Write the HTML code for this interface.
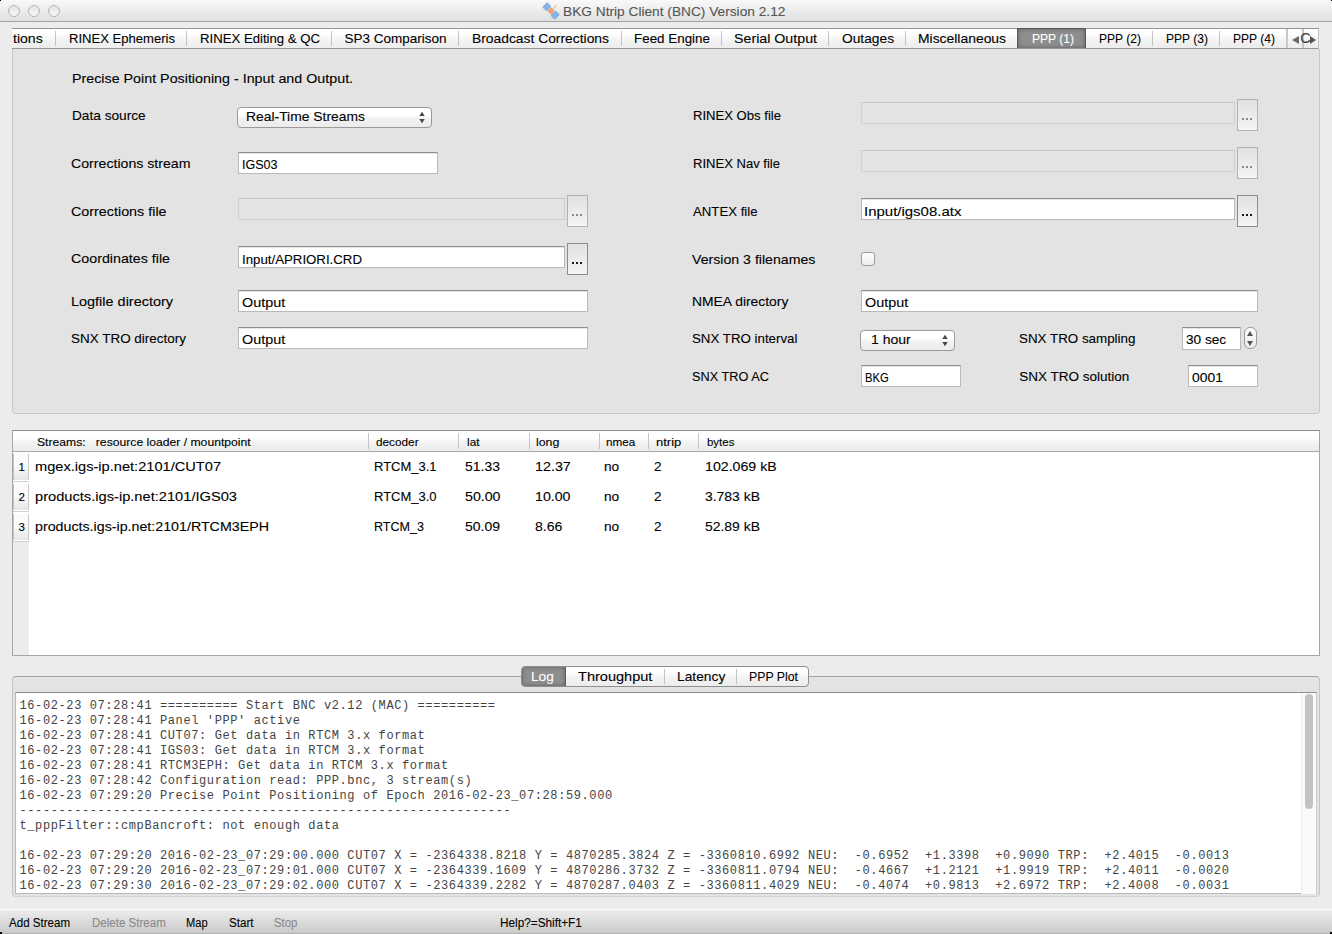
<!DOCTYPE html>
<html><head><meta charset="utf-8">
<style>
html,body{margin:0;padding:0}
body{width:1332px;height:934px;overflow:hidden;position:relative;background:#ececec;font-family:"Liberation Sans",sans-serif;}
.t{position:absolute;white-space:pre;font-family:"Liberation Sans",sans-serif;-webkit-text-stroke:0.1px currentColor;}
.b{position:absolute;box-sizing:border-box;}
.m{position:absolute;white-space:pre;font-family:"Liberation Mono",monospace;font-size:12px;letter-spacing:0.605px;line-height:15px;color:#444;}
.ed{position:absolute;box-sizing:border-box;background:#fff;border:1px solid #b9b9b9;border-top-color:#8e8e8e;box-shadow:inset 0 1px 0 #e6e6e6;}
.dis{position:absolute;box-sizing:border-box;background:#e3e3e3;border:1px solid #d0d0d0;border-top-color:#c4c4c4;}
.btn{position:absolute;box-sizing:border-box;background:linear-gradient(#e1e1e1,#f5f5f5);border:1px solid #8c8c8c;}
.btn.d{border-color:#b3b3b3;}
.dot{position:absolute;width:2px;height:2px;background:#1a1a1a;}
.btn.d .dot{background:#8a8a8a;}
.cb{position:absolute;box-sizing:border-box;background:linear-gradient(#ffffff 35%,#f1f1f1 58%,#ebebeb);border:1px solid #9a9a9a;border-radius:4px;}
.sep{position:absolute;width:1px;background:#c2c2c2;}
</style></head><body>
<div class="b" style="left:0;top:0;width:1332px;height:22px;background:linear-gradient(#f9f9f9,#e0e0e0);border-bottom:1px solid #a4a4a4"></div>
<div class="b" style="left:8px;top:5px;width:12px;height:12px;border-radius:50%;border:1px solid #b4b4b4;background:linear-gradient(#e4e4e4,#f7f7f7)"></div>
<div class="b" style="left:28px;top:5px;width:12px;height:12px;border-radius:50%;border:1px solid #b4b4b4;background:linear-gradient(#e4e4e4,#f7f7f7)"></div>
<div class="b" style="left:48px;top:5px;width:12px;height:12px;border-radius:50%;border:1px solid #b4b4b4;background:linear-gradient(#e4e4e4,#f7f7f7)"></div>
<div class="b" style="left:0;top:0;width:1px;height:1px;background:#000"></div>
<div class="b" style="left:1331px;top:0;width:1px;height:1px;background:#000"></div>
<svg style="position:absolute;left:540px;top:0px" width="22" height="22" viewBox="0 0 22 22">
<g transform="translate(11 10.9) scale(1.12) translate(-11 -10.9) rotate(45 11 10.9)"><rect x="3" y="7.7" width="5.4" height="6.4" rx="0.8" fill="#80b0e4"/><rect x="13.6" y="7.7" width="5.4" height="6.4" rx="0.8" fill="#80b0e4"/>
<line x1="5.7" y1="7.9" x2="5.7" y2="14" stroke="#a9cde8" stroke-width="0.6"/><line x1="16.3" y1="7.9" x2="16.3" y2="14" stroke="#a9cde8" stroke-width="0.6"/>
<rect x="8.5" y="8.5" width="5" height="4.8" rx="0.8" fill="#efa37d"/><line x1="11" y1="8.6" x2="11" y2="3.6" stroke="#f2b896" stroke-width="0.9"/></g></svg>
<div class="t" style="left:563.40px;top:3.80px;font-size:13.5px;line-height:15px;letter-spacing:0.000px;color:#555;transform:scaleX(1.0151);transform-origin:0 0;">BKG Ntrip Client (BNC) Version 2.12</div>
<div class="b" style="left:12px;top:28px;width:1307px;height:21px;background:linear-gradient(#ffffff 25%,#f4f4f4 53%,#ececec);border-top:1px solid #959595;border-bottom:1px solid #959595;border-right:1px solid #c6c6c6"></div>
<div class="sep" style="left:55px;top:31px;height:15px"></div>
<div class="sep" style="left:186px;top:31px;height:15px"></div>
<div class="sep" style="left:331px;top:31px;height:15px"></div>
<div class="sep" style="left:458px;top:31px;height:15px"></div>
<div class="sep" style="left:621px;top:31px;height:15px"></div>
<div class="sep" style="left:721px;top:31px;height:15px"></div>
<div class="sep" style="left:828px;top:31px;height:15px"></div>
<div class="sep" style="left:905px;top:31px;height:15px"></div>
<div class="sep" style="left:1152px;top:31px;height:15px"></div>
<div class="sep" style="left:1219px;top:31px;height:15px"></div>
<div class="b" style="left:1017px;top:28px;width:69px;height:20px;background:#8e8e8e;border:1px solid #575757;border-bottom:none;box-shadow:inset 0 0 4px #5e5e5e"></div>
<div class="t" style="left:68.50px;top:31.00px;font-size:13.5px;line-height:15px;letter-spacing:0.000px;color:#000;transform:scaleX(0.9680);transform-origin:0 0;">RINEX Ephemeris</div>
<div class="t" style="left:199.50px;top:31.00px;font-size:13.5px;line-height:15px;letter-spacing:0.000px;color:#000;transform:scaleX(0.9756);transform-origin:0 0;">RINEX Editing &amp; QC</div>
<div class="t" style="left:344.50px;top:31.00px;font-size:13.5px;line-height:15px;letter-spacing:0.000px;color:#000;">SP3 Comparison</div>
<div class="t" style="left:472.00px;top:31.00px;font-size:13.5px;line-height:15px;letter-spacing:0.000px;color:#000;transform:scaleX(1.0254);transform-origin:0 0;">Broadcast Corrections</div>
<div class="t" style="left:634.00px;top:31.00px;font-size:13.5px;line-height:15px;letter-spacing:0.000px;color:#000;transform:scaleX(0.9922);transform-origin:0 0;">Feed Engine</div>
<div class="t" style="left:734.00px;top:31.00px;font-size:13.5px;line-height:15px;letter-spacing:0.000px;color:#000;transform:scaleX(1.0533);transform-origin:0 0;">Serial Output</div>
<div class="t" style="left:841.50px;top:31.00px;font-size:13.5px;line-height:15px;letter-spacing:0.000px;color:#000;transform:scaleX(1.0196);transform-origin:0 0;">Outages</div>
<div class="t" style="left:918.00px;top:31.00px;font-size:13.5px;line-height:15px;letter-spacing:0.000px;color:#000;transform:scaleX(1.0292);transform-origin:0 0;">Miscellaneous</div>
<div class="t" style="left:1031.50px;top:31.00px;font-size:13.5px;line-height:15px;letter-spacing:0.000px;color:#fff;transform:scaleX(0.8936);transform-origin:0 0;">PPP (1)</div>
<div class="t" style="left:1099.00px;top:31.00px;font-size:13.5px;line-height:15px;letter-spacing:0.000px;color:#000;transform:scaleX(0.8936);transform-origin:0 0;">PPP (2)</div>
<div class="t" style="left:1165.50px;top:31.00px;font-size:13.5px;line-height:15px;letter-spacing:0.000px;color:#000;transform:scaleX(0.8936);transform-origin:0 0;">PPP (3)</div>
<div class="t" style="left:1233.00px;top:31.00px;font-size:13.5px;line-height:15px;letter-spacing:0.000px;color:#000;transform:scaleX(0.8936);transform-origin:0 0;">PPP (4)</div>
<div class="b" style="left:12px;top:29px;width:43px;height:19px;overflow:hidden">
<div class="t" style="left:1.00px;top:2.00px;font-size:13.5px;line-height:15px;letter-spacing:0.000px;color:#000;transform:scaleX(1.0421);transform-origin:0 0;">tions</div>
</div>
<div class="b" style="left:1286px;top:29px;width:2px;height:19px;background:#c8c8c8"></div>
<div class="b" style="left:1302px;top:29px;width:2px;height:19px;background:#c4c4c4"></div>
<div class="b" style="left:1292px;top:36px;width:0;height:0;border-top:4px solid transparent;border-bottom:4px solid transparent;border-right:7px solid #6a6a6a"></div>
<div class="b" style="left:1310px;top:36px;width:0;height:0;border-top:4px solid transparent;border-bottom:4px solid transparent;border-left:6px solid #555"></div>
<div class="t" style="left:1300.20px;top:30.00px;font-size:14.5px;line-height:16px;letter-spacing:0.000px;color:#444;">C</div>
<div class="b" style="left:12px;top:49px;width:1308px;height:365px;background:#e3e3e3;border:1px solid #c8c8c8;border-top:none;border-radius:0 0 4px 4px"></div>
<div class="t" style="left:71.60px;top:71.20px;font-size:13.5px;line-height:15px;letter-spacing:0.000px;color:#000;transform:scaleX(1.0580);transform-origin:0 0;">Precise Point Positioning - Input and Output.</div>
<div class="t" style="left:71.60px;top:107.70px;font-size:13.5px;line-height:15px;letter-spacing:0.000px;color:#000;transform:scaleX(1.0124);transform-origin:0 0;">Data source</div>
<div class="t" style="left:71.10px;top:156.20px;font-size:13.5px;line-height:15px;letter-spacing:0.000px;color:#000;transform:scaleX(1.0482);transform-origin:0 0;">Corrections stream</div>
<div class="t" style="left:71.10px;top:203.70px;font-size:13.5px;line-height:15px;letter-spacing:0.000px;color:#000;transform:scaleX(1.0611);transform-origin:0 0;">Corrections file</div>
<div class="t" style="left:71.10px;top:251.40px;font-size:13.5px;line-height:15px;letter-spacing:0.000px;color:#000;transform:scaleX(1.0554);transform-origin:0 0;">Coordinates file</div>
<div class="t" style="left:71.10px;top:293.80px;font-size:13.5px;line-height:15px;letter-spacing:0.000px;color:#000;transform:scaleX(1.0703);transform-origin:0 0;">Logfile directory</div>
<div class="t" style="left:71.10px;top:330.60px;font-size:13.5px;line-height:15px;letter-spacing:0.000px;color:#000;transform:scaleX(0.9974);transform-origin:0 0;">SNX TRO directory</div>
<div class="t" style="left:692.50px;top:108.20px;font-size:13.5px;line-height:15px;letter-spacing:0.000px;color:#000;transform:scaleX(0.9692);transform-origin:0 0;">RINEX Obs file</div>
<div class="t" style="left:692.50px;top:156.20px;font-size:13.5px;line-height:15px;letter-spacing:0.000px;color:#000;transform:scaleX(0.9667);transform-origin:0 0;">RINEX Nav file</div>
<div class="t" style="left:692.50px;top:203.80px;font-size:13.5px;line-height:15px;letter-spacing:0.000px;color:#000;transform:scaleX(0.9773);transform-origin:0 0;">ANTEX file</div>
<div class="t" style="left:692.40px;top:252.00px;font-size:13.5px;line-height:15px;letter-spacing:0.000px;color:#000;transform:scaleX(1.0475);transform-origin:0 0;">Version 3 filenames</div>
<div class="t" style="left:692.40px;top:294.00px;font-size:13.5px;line-height:15px;letter-spacing:0.000px;color:#000;transform:scaleX(1.0277);transform-origin:0 0;">NMEA directory</div>
<div class="t" style="left:692.40px;top:330.80px;font-size:13.5px;line-height:15px;letter-spacing:0.000px;color:#000;transform:scaleX(0.9850);transform-origin:0 0;">SNX TRO interval</div>
<div class="t" style="left:692.40px;top:369.00px;font-size:13.5px;line-height:15px;letter-spacing:0.000px;color:#000;transform:scaleX(0.9423);transform-origin:0 0;">SNX TRO AC</div>
<div class="t" style="left:1019.20px;top:330.60px;font-size:13.5px;line-height:15px;letter-spacing:0.000px;color:#000;transform:scaleX(0.9906);transform-origin:0 0;">SNX TRO sampling</div>
<div class="t" style="left:1019.20px;top:368.75px;font-size:13.5px;line-height:15px;letter-spacing:0.000px;color:#000;">SNX TRO solution</div>
<div class="cb" style="left:237px;top:107px;width:195px;height:21px"></div>
<svg style="position:absolute;left:418px;top:111.0px" width="8" height="13" viewBox="0 0 8 13"><polygon points="1.3,5 6.7,5 4,0.8" fill="#474747"/><polygon points="1.3,8 6.7,8 4,12.2" fill="#474747"/></svg>
<div class="t" style="left:246.10px;top:109.00px;font-size:13.5px;line-height:15px;letter-spacing:0.000px;color:#000;transform:scaleX(1.0276);transform-origin:0 0;">Real-Time Streams</div>
<div class="ed" style="left:238px;top:152px;width:200px;height:22px"></div>
<div class="t" style="left:241.60px;top:157.00px;font-size:13.5px;line-height:15px;letter-spacing:0.000px;color:#000;transform:scaleX(0.9269);transform-origin:0 0;">IGS03</div>
<div class="dis" style="left:238px;top:198px;width:327px;height:22px"></div>
<div class="btn d" style="left:567px;top:195px;width:21px;height:32px"><div class="dot" style="left:4px;top:18px"></div><div class="dot" style="left:8px;top:18px"></div><div class="dot" style="left:12px;top:18px"></div></div>
<div class="ed" style="left:238px;top:246px;width:327px;height:22px"></div>
<div class="t" style="left:241.60px;top:251.60px;font-size:13.5px;line-height:15px;letter-spacing:0.000px;color:#000;transform:scaleX(0.9812);transform-origin:0 0;">Input/APRIORI.CRD</div>
<div class="btn" style="left:567px;top:243px;width:21px;height:32px"><div class="dot" style="left:4px;top:18px"></div><div class="dot" style="left:8px;top:18px"></div><div class="dot" style="left:12px;top:18px"></div></div>
<div class="ed" style="left:238px;top:290px;width:350px;height:22px"></div>
<div class="t" style="left:241.50px;top:295.00px;font-size:13.5px;line-height:15px;letter-spacing:0.000px;color:#000;transform:scaleX(1.0642);transform-origin:0 0;">Output</div>
<div class="ed" style="left:238px;top:327px;width:350px;height:22px"></div>
<div class="t" style="left:241.50px;top:331.70px;font-size:13.5px;line-height:15px;letter-spacing:0.000px;color:#000;transform:scaleX(1.0642);transform-origin:0 0;">Output</div>
<div class="dis" style="left:861px;top:102px;width:374px;height:22px"></div>
<div class="btn d" style="left:1237px;top:99px;width:21px;height:32px"><div class="dot" style="left:4px;top:18px"></div><div class="dot" style="left:8px;top:18px"></div><div class="dot" style="left:12px;top:18px"></div></div>
<div class="dis" style="left:861px;top:150px;width:374px;height:22px"></div>
<div class="btn d" style="left:1237px;top:147px;width:21px;height:32px"><div class="dot" style="left:4px;top:18px"></div><div class="dot" style="left:8px;top:18px"></div><div class="dot" style="left:12px;top:18px"></div></div>
<div class="ed" style="left:861px;top:198px;width:374px;height:22px"></div>
<div class="t" style="left:864.30px;top:203.50px;font-size:13.5px;line-height:15px;letter-spacing:0.000px;color:#000;transform:scaleX(1.1093);transform-origin:0 0;">Input/igs08.atx</div>
<div class="btn" style="left:1237px;top:195px;width:21px;height:32px"><div class="dot" style="left:4px;top:18px"></div><div class="dot" style="left:8px;top:18px"></div><div class="dot" style="left:12px;top:18px"></div></div>
<div class="b" style="left:861px;top:252px;width:14px;height:14px;border-radius:3px;border:1px solid #9b9b9b;background:linear-gradient(#fdfdfd,#ececec)"></div>
<div class="ed" style="left:861px;top:290px;width:397px;height:22px"></div>
<div class="t" style="left:864.50px;top:295.00px;font-size:13.5px;line-height:15px;letter-spacing:0.000px;color:#000;transform:scaleX(1.0642);transform-origin:0 0;">Output</div>
<div class="cb" style="left:860px;top:330px;width:95px;height:21px"></div>
<svg style="position:absolute;left:941px;top:334.0px" width="8" height="13" viewBox="0 0 8 13"><polygon points="1.3,5 6.7,5 4,0.8" fill="#474747"/><polygon points="1.3,8 6.7,8 4,12.2" fill="#474747"/></svg>
<div class="t" style="left:870.60px;top:331.60px;font-size:13.5px;line-height:15px;letter-spacing:0.000px;color:#000;transform:scaleX(1.0392);transform-origin:0 0;">1 hour</div>
<div class="ed" style="left:861px;top:365px;width:100px;height:22px"></div>
<div class="t" style="left:864.80px;top:369.50px;font-size:13.5px;line-height:15px;letter-spacing:0.000px;color:#000;transform:scaleX(0.8316);transform-origin:0 0;">BKG</div>
<div class="ed" style="left:1182px;top:327px;width:59px;height:23px"></div>
<div class="t" style="left:1185.80px;top:331.70px;font-size:13.5px;line-height:15px;letter-spacing:0.000px;color:#000;transform:scaleX(1.0101);transform-origin:0 0;">30 sec</div>
<div class="b" style="left:1244px;top:327px;width:13px;height:22px;border-radius:6px;border:1px solid #9a9a9a;background:linear-gradient(#fdfdfd,#ebebeb)"></div>
<div class="b" style="left:1247px;top:331px;width:0;height:0;border-left:3.5px solid transparent;border-right:3.5px solid transparent;border-bottom:5px solid #555"></div>
<div class="b" style="left:1247px;top:341px;width:0;height:0;border-left:3.5px solid transparent;border-right:3.5px solid transparent;border-top:5px solid #555"></div>
<div class="ed" style="left:1188px;top:365px;width:70px;height:22px"></div>
<div class="t" style="left:1191.60px;top:369.60px;font-size:13.5px;line-height:15px;letter-spacing:0.000px;color:#000;transform:scaleX(1.0267);transform-origin:0 0;">0001</div>
<div class="b" style="left:12px;top:430px;width:1308px;height:226px;background:#fff;border:1px solid #a5a5a5;border-top-color:#8c8c8c"></div>
<div class="b" style="left:13px;top:431px;width:1306px;height:21px;background:linear-gradient(#ffffff 35%,#f3f3f3 55%,#ebebeb);border-bottom:1px solid #a9a9a9"></div>
<div class="b" style="left:13px;top:542px;width:16px;height:113px;background:#ececec"></div>
<div class="b" style="left:13px;top:454px;width:16px;height:26px;background:linear-gradient(#fbfbfb 45%,#e5e5e5);border-left:1px solid #c2c2c2;border-right:1px solid #c9c9c9"></div>
<div class="b" style="left:13px;top:481px;width:16px;height:1px;background:#d0d0d0"></div>
<div class="b" style="left:13px;top:484px;width:16px;height:26px;background:linear-gradient(#fbfbfb 45%,#e5e5e5);border-left:1px solid #c2c2c2;border-right:1px solid #c9c9c9"></div>
<div class="b" style="left:13px;top:511px;width:16px;height:1px;background:#d0d0d0"></div>
<div class="b" style="left:13px;top:514px;width:16px;height:26px;background:linear-gradient(#fbfbfb 45%,#e5e5e5);border-left:1px solid #c2c2c2;border-right:1px solid #c9c9c9"></div>
<div class="b" style="left:13px;top:541px;width:16px;height:1px;background:#d0d0d0"></div>
<div class="sep" style="left:368px;top:433px;height:16px;background:#c4c4c4"></div>
<div class="sep" style="left:458px;top:433px;height:16px;background:#c4c4c4"></div>
<div class="sep" style="left:529px;top:433px;height:16px;background:#c4c4c4"></div>
<div class="sep" style="left:599px;top:433px;height:16px;background:#c4c4c4"></div>
<div class="sep" style="left:648px;top:433px;height:16px;background:#c4c4c4"></div>
<div class="sep" style="left:698px;top:433px;height:16px;background:#c4c4c4"></div>
<div class="t" style="left:36.60px;top:435.60px;font-size:11.5px;line-height:12px;letter-spacing:0.000px;color:#000;transform:scaleX(1.0579);transform-origin:0 0;">Streams:   resource loader / mountpoint</div>
<div class="t" style="left:376.40px;top:435.60px;font-size:11.5px;line-height:12px;letter-spacing:0.000px;color:#000;transform:scaleX(1.0240);transform-origin:0 0;">decoder</div>
<div class="t" style="left:466.60px;top:435.60px;font-size:11.5px;line-height:12px;letter-spacing:0.000px;color:#000;transform:scaleX(1.0328);transform-origin:0 0;">lat</div>
<div class="t" style="left:536.00px;top:435.60px;font-size:11.5px;line-height:12px;letter-spacing:0.000px;color:#000;transform:scaleX(1.0737);transform-origin:0 0;">long</div>
<div class="t" style="left:606.00px;top:435.60px;font-size:11.5px;line-height:12px;letter-spacing:0.000px;color:#000;transform:scaleX(1.0174);transform-origin:0 0;">nmea</div>
<div class="t" style="left:656.40px;top:435.60px;font-size:11.5px;line-height:12px;letter-spacing:0.000px;color:#000;transform:scaleX(1.1295);transform-origin:0 0;">ntrip</div>
<div class="t" style="left:706.90px;top:435.60px;font-size:11.5px;line-height:12px;letter-spacing:0.000px;color:#000;transform:scaleX(0.9964);transform-origin:0 0;">bytes</div>
<div class="t" style="left:18.50px;top:460.70px;font-size:11.5px;line-height:12px;letter-spacing:0.000px;color:#000;">1</div>
<div class="t" style="left:34.60px;top:459.20px;font-size:13.5px;line-height:15px;letter-spacing:0.000px;color:#000;transform:scaleX(1.0827);transform-origin:0 0;">mgex.igs-ip.net:2101/CUT07</div>
<div class="t" style="left:374.30px;top:459.20px;font-size:13.5px;line-height:15px;letter-spacing:0.000px;color:#000;transform:scaleX(0.9615);transform-origin:0 0;">RTCM_3.1</div>
<div class="t" style="left:464.90px;top:459.20px;font-size:13.5px;line-height:15px;letter-spacing:0.000px;color:#000;transform:scaleX(1.0355);transform-origin:0 0;">51.33</div>
<div class="t" style="left:534.80px;top:459.20px;font-size:13.5px;line-height:15px;letter-spacing:0.000px;color:#000;transform:scaleX(1.0592);transform-origin:0 0;">12.37</div>
<div class="t" style="left:604.40px;top:459.20px;font-size:13.5px;line-height:15px;letter-spacing:0.000px;color:#000;transform:scaleX(1.0133);transform-origin:0 0;">no</div>
<div class="t" style="left:654.00px;top:459.20px;font-size:13.5px;line-height:15px;letter-spacing:0.000px;color:#000;">2</div>
<div class="t" style="left:704.70px;top:459.20px;font-size:13.5px;line-height:15px;letter-spacing:0.000px;color:#000;transform:scaleX(1.0498);transform-origin:0 0;">102.069 kB</div>
<div class="t" style="left:18.50px;top:490.60px;font-size:11.5px;line-height:12px;letter-spacing:0.000px;color:#000;">2</div>
<div class="t" style="left:34.60px;top:489.10px;font-size:13.5px;line-height:15px;letter-spacing:0.000px;color:#000;transform:scaleX(1.0854);transform-origin:0 0;">products.igs-ip.net:2101/IGS03</div>
<div class="t" style="left:374.30px;top:489.10px;font-size:13.5px;line-height:15px;letter-spacing:0.000px;color:#000;transform:scaleX(0.9615);transform-origin:0 0;">RTCM_3.0</div>
<div class="t" style="left:464.90px;top:489.10px;font-size:13.5px;line-height:15px;letter-spacing:0.000px;color:#000;transform:scaleX(1.0503);transform-origin:0 0;">50.00</div>
<div class="t" style="left:534.80px;top:489.10px;font-size:13.5px;line-height:15px;letter-spacing:0.000px;color:#000;transform:scaleX(1.0503);transform-origin:0 0;">10.00</div>
<div class="t" style="left:604.40px;top:489.10px;font-size:13.5px;line-height:15px;letter-spacing:0.000px;color:#000;transform:scaleX(1.0133);transform-origin:0 0;">no</div>
<div class="t" style="left:654.00px;top:489.10px;font-size:13.5px;line-height:15px;letter-spacing:0.000px;color:#000;">2</div>
<div class="t" style="left:704.70px;top:489.10px;font-size:13.5px;line-height:15px;letter-spacing:0.000px;color:#000;transform:scaleX(1.0319);transform-origin:0 0;">3.783 kB</div>
<div class="t" style="left:18.50px;top:520.70px;font-size:11.5px;line-height:12px;letter-spacing:0.000px;color:#000;">3</div>
<div class="t" style="left:34.60px;top:519.20px;font-size:13.5px;line-height:15px;letter-spacing:0.000px;color:#000;transform:scaleX(1.0545);transform-origin:0 0;">products.igs-ip.net:2101/RTCM3EPH</div>
<div class="t" style="left:374.30px;top:519.20px;font-size:13.5px;line-height:15px;letter-spacing:0.000px;color:#000;transform:scaleX(0.9294);transform-origin:0 0;">RTCM_3</div>
<div class="t" style="left:464.90px;top:519.20px;font-size:13.5px;line-height:15px;letter-spacing:0.000px;color:#000;transform:scaleX(1.0355);transform-origin:0 0;">50.09</div>
<div class="t" style="left:534.80px;top:519.20px;font-size:13.5px;line-height:15px;letter-spacing:0.000px;color:#000;transform:scaleX(1.0418);transform-origin:0 0;">8.66</div>
<div class="t" style="left:604.40px;top:519.20px;font-size:13.5px;line-height:15px;letter-spacing:0.000px;color:#000;transform:scaleX(1.0133);transform-origin:0 0;">no</div>
<div class="t" style="left:654.00px;top:519.20px;font-size:13.5px;line-height:15px;letter-spacing:0.000px;color:#000;">2</div>
<div class="t" style="left:704.70px;top:519.20px;font-size:13.5px;line-height:15px;letter-spacing:0.000px;color:#000;transform:scaleX(1.0319);transform-origin:0 0;">52.89 kB</div>
<div class="b" style="left:12px;top:676px;width:1308px;height:221px;background:#e3e3e3;border:1px solid #c4c4c4;border-top-color:#a2a2a2;border-bottom-color:#d2d2d2;border-radius:4px"></div>
<div class="b" style="left:15px;top:692px;width:1302px;height:202px;background:#fff;border:1px solid #b9b9b9;border-top-color:#8e8e8e;border-right-color:#c9c9c9"></div>
<div class="b" style="left:1301px;top:693px;width:15px;height:201px;background:#fafafa;border-left:1px solid #ececec"></div>
<div class="b" style="left:1305px;top:694px;width:8px;height:115px;border-radius:4px;background:#c3c3c3"></div>
<div class="b" style="left:521px;top:666px;width:288px;height:21px;border-radius:4px;border:1px solid #8f8f8f;background:linear-gradient(#ffffff 25%,#f4f4f4 53%,#ececec);overflow:hidden"><div class="b" style="left:-1px;top:-1px;width:45px;height:21px;background:#8e8e8e;border:1px solid #5c5c5c;box-shadow:inset 0 0 4px #5e5e5e"></div></div>
<div class="sep" style="left:664px;top:669px;height:15px;background:#c4c4c4"></div>
<div class="sep" style="left:736px;top:669px;height:15px;background:#c4c4c4"></div>
<div class="t" style="left:531.00px;top:669.20px;font-size:13.5px;line-height:15px;letter-spacing:0.000px;color:#fff;transform:scaleX(1.0089);transform-origin:0 0;">Log</div>
<div class="t" style="left:578.40px;top:669.20px;font-size:13.5px;line-height:15px;letter-spacing:0.000px;color:#000;transform:scaleX(1.0768);transform-origin:0 0;">Throughput</div>
<div class="t" style="left:677.00px;top:669.20px;font-size:13.5px;line-height:15px;letter-spacing:0.000px;color:#000;transform:scaleX(1.0211);transform-origin:0 0;">Latency</div>
<div class="t" style="left:749.00px;top:669.20px;font-size:13.5px;line-height:15px;letter-spacing:0.000px;color:#000;transform:scaleX(0.9108);transform-origin:0 0;">PPP Plot</div>
<div class="b" style="left:16px;top:693px;width:1285px;height:200px;overflow:hidden">
<div class="m" style="left:3.5px;top:6px">16-02-23 07:28:41 ========== Start BNC v2.12 (MAC) ==========
16-02-23 07:28:41 Panel 'PPP' active
16-02-23 07:28:41 CUT07: Get data in RTCM 3.x format
16-02-23 07:28:41 IGS03: Get data in RTCM 3.x format
16-02-23 07:28:41 RTCM3EPH: Get data in RTCM 3.x format
16-02-23 07:28:42 Configuration read: PPP.bnc, 3 stream(s)
16-02-23 07:29:20 Precise Point Positioning of Epoch 2016-02-23_07:28:59.000
---------------------------------------------------------------
t_pppFilter::cmpBancroft: not enough data

16-02-23 07:29:20 2016-02-23_07:29:00.000 CUT07 X = -2364338.8218 Y = 4870285.3824 Z = -3360810.6992 NEU:  -0.6952  +1.3398  +0.9090 TRP:  +2.4015  -0.0013
16-02-23 07:29:20 2016-02-23_07:29:01.000 CUT07 X = -2364339.1609 Y = 4870286.3732 Z = -3360811.0794 NEU:  -0.4667  +1.2121  +1.9919 TRP:  +2.4011  -0.0020
16-02-23 07:29:30 2016-02-23_07:29:02.000 CUT07 X = -2364339.2282 Y = 4870287.0403 Z = -3360811.4029 NEU:  -0.4074  +0.9813  +2.6972 TRP:  +2.4008  -0.0031</div>
</div>
<div class="b" style="left:0;top:909px;width:1332px;height:25px;background:linear-gradient(#ececec,#c9c9c9);border-top:1px solid #fbfbfb"></div>
<div class="t" style="left:9.10px;top:915.60px;font-size:12.5px;line-height:14px;letter-spacing:0.000px;color:#000;transform:scaleX(0.9258);transform-origin:0 0;">Add Stream</div>
<div class="t" style="left:91.50px;top:915.60px;font-size:12.5px;line-height:14px;letter-spacing:0.000px;color:#8a8a8a;transform:scaleX(0.9237);transform-origin:0 0;">Delete Stream</div>
<div class="t" style="left:186.40px;top:915.60px;font-size:12.5px;line-height:14px;letter-spacing:0.000px;color:#000;transform:scaleX(0.8889);transform-origin:0 0;">Map</div>
<div class="t" style="left:229.00px;top:915.60px;font-size:12.5px;line-height:14px;letter-spacing:0.000px;color:#000;transform:scaleX(0.9280);transform-origin:0 0;">Start</div>
<div class="t" style="left:274.00px;top:915.60px;font-size:12.5px;line-height:14px;letter-spacing:0.000px;color:#8a8a8a;transform:scaleX(0.9105);transform-origin:0 0;">Stop</div>
<div class="t" style="left:499.80px;top:915.60px;font-size:12.5px;line-height:14px;letter-spacing:0.000px;color:#000;transform:scaleX(0.9425);transform-origin:0 0;">Help?=Shift+F1</div>
<div class="b" style="left:0;top:933px;width:1332px;height:1px;background:#b2b2b2"></div>
<div class="b" style="left:0;top:932px;width:2px;height:2px;background:#000"></div>
<div class="b" style="left:1330px;top:932px;width:2px;height:2px;background:#000"></div>
</body></html>
